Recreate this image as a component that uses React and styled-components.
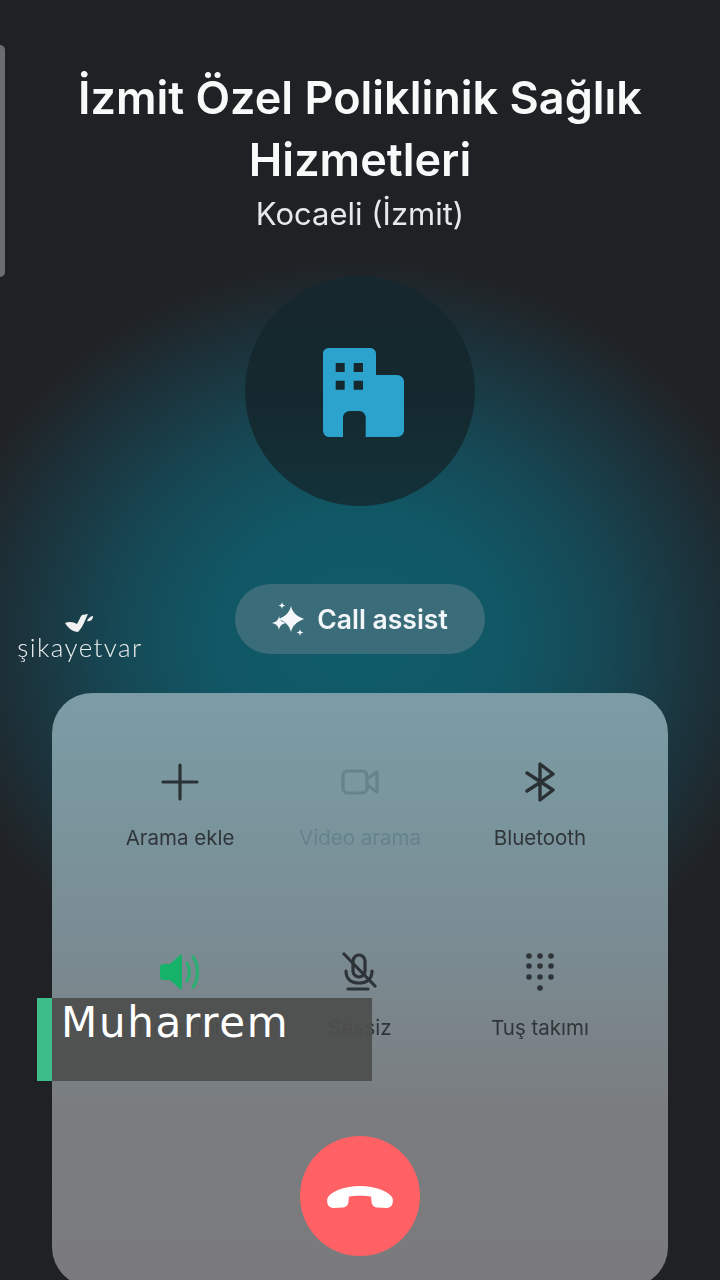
import React from "react";
import styled, { createGlobalStyle } from "styled-components";

const GlobalStyle = createGlobalStyle`
    html, body {
        margin: 0;
        padding: 0;
        background: #202124;
    }
`

const Page = styled.div`
    position: relative;
    width: 720px;
    height: 1280px;
    overflow: hidden;
    background: #202124;
    font-family: "Inter", "Liberation Sans", sans-serif;
`

const Screen = styled.div`
    position: relative;
    height: 1280px;
    display: flex;
    flex-direction: column;
    align-items: center;
    filter: blur(0.5px);
    background:
        radial-gradient(ellipse 430px 385px at 360px 640px,
            #0f5c6a 0%, #115664 35%, #164753 58%, #1b343d 78%, #1f272b 93%, #202124 100%);
`

const Title = styled.h1`
    margin: 67px 0 0;
    width: 640px;
    text-align: center;
    font-size: 45px;
    line-height: 62px;
    font-weight: 600;
    color: #f8f9f9;
`

const Subtitle = styled.div`
    font-size: 31px;
    line-height: 46px;
    color: #e6e8e9;
`

const Avatar = styled.div`
    margin-top: 39px;
    width: 230px;
    height: 230px;
    flex-shrink: 0;
    box-sizing: border-box;
    padding: 2px 0 0 6px;
    border-radius: 50%;
    background: linear-gradient(180deg, #16272d 0%, #14292f 55%, #133139 100%);
    display: flex;
    align-items: center;
    justify-content: center;
`

const Chip = styled.div`
    margin-top: 78px;
    width: 250px;
    height: 70px;
    flex-shrink: 0;
    border-radius: 35px;
    background: #3a6d79;
    display: flex;
    align-items: center;
    justify-content: center;
    gap: 13px;
    font-size: 26.5px;
    font-weight: 600;
    color: #f2f6f8;
`

const Panel = styled.div`
    margin-top: 39px;
    width: 616px;
    height: 594px;
    flex-shrink: 0;
    box-sizing: border-box;
    padding: 67px 38px 0;
    border-radius: 40px;
    background: linear-gradient(180deg, #7b9ca6 0%, #7a939b 25%, #7a8a91 45%, #7a7d80 70%, #7a7a7c 100%);
    display: flex;
    flex-direction: column;
    align-items: center;
`

const Grid = styled.div`
    width: 100%;
    display: grid;
    grid-template-columns: repeat(3, 180px);
    grid-auto-rows: 90px;
    row-gap: 100px;
`

const Item = styled.div`
    display: flex;
    flex-direction: column;
    align-items: center;
`

const IconBox = styled.div`
    height: 44px;
    display: flex;
    align-items: center;
    justify-content: center;
`

const Label = styled.div`
    margin-top: 22px;
    font-size: 20.5px;
    line-height: 24px;
    white-space: nowrap;
    color: ${props => props.$off ? "#64838c" : "#2f3539"};
`

const EndButton = styled.div`
    margin-top: 96px;
    width: 120px;
    height: 120px;
    flex-shrink: 0;
    box-sizing: border-box;
    padding-top: 2px;
    border-radius: 50%;
    background: #ff6165;
    display: flex;
    align-items: center;
    justify-content: center;
`

const Handle = styled.div`
    position: absolute;
    left: 0;
    top: 45px;
    width: 5px;
    height: 232px;
    border-radius: 0 5px 5px 0;
    background: #6c6d6f;
`

const Watermark = styled.div`
    position: absolute;
    left: 17px;
    top: 614px;
    width: 126px;
    display: flex;
    flex-direction: column;
    align-items: center;
    color: #eceef0;
`

const WatermarkText = styled.div`
    font-family: "Lato", sans-serif;
    font-weight: 300;
    font-size: 26px;
    line-height: 30px;
    letter-spacing: 1.4px;
    white-space: nowrap;
`

const NameTag = styled.div`
    position: absolute;
    left: 37px;
    top: 998px;
    width: 311px;
    height: 83px;
    border-left: 15px solid #3dbd8a;
    padding-left: 9px;
    background: rgba(78, 78, 78, 0.94);
    color: #ffffff;
    font-family: "DejaVu Sans", sans-serif;
    font-size: 42px;
    line-height: 50px;
    letter-spacing: 1.7px;
`

const BuildingIcon = () => (
    <svg width="81" height="89" viewBox="0 0 81 89">
        <path
            fillRule="evenodd"
            fill="#2ba3cd"
            d="M6 0H47C50.5 0 53 2.5 53 6V27H74C78 27 81 30 81 34V82C81 86 78 89 74 89H42.7V70C42.7 66 40 63 36 63H27C23 63 20 66 20 70V89H6C2.5 89 0 86 0 82V6C0 2.5 2.5 0 6 0ZM12.7 15V24H21.7V15ZM30.7 15V24H40V15ZM12.7 32.7V41.7H21.7V32.7ZM30.7 32.7V41.7H40V32.7Z"
        />
    </svg>
);

const SparkleIcon = () => (
    <svg width="32" height="34" viewBox="0 0 32 34" fill="#f5f8fb">
        <path d="M19 4C20.5 10 24 14 32 17C24 20 20.5 24 19 30C17.5 24 14 20 7 17C14 14 17.5 10 19 4Z"/>
        <path d="M7 14C7.8 18 9.5 20 14 21C9.5 22 7.8 24 7 28C6.2 24 4.5 22 0 21C4.5 20 6.2 18 7 14Z"/>
        <path d="M10 0C10.4 2.4 11 3 13.5 3.5C11 4 10.4 4.6 10 7C9.6 4.6 9 4 6.5 3.5C9 3 9.6 2.4 10 0Z"/>
        <path d="M28 27C28.4 29.4 29 30 31.5 30.5C29 31 28.4 31.6 28 34C27.6 31.6 27 31 24.5 30.5C27 30 27.6 29.4 28 27Z"/>
    </svg>
);

const LogoMark = () => (
    <svg width="30" height="18" viewBox="0 0 30 18" fill="#f1f1f4">
        <path d="M0 9C4 7 9 8 12 10C14 7 15 3 17 1L23 0C20 6 18 13 13 18C8 18 3 14 0 9Z"/>
        <path d="M22 7C23 4 26 2 28 2C28 5 26 8 22 7Z"/>
    </svg>
);

const PlusIcon = () => (
    <svg width="38" height="38" viewBox="0 0 38 38" stroke="#2a3135" strokeWidth="3.2" strokeLinecap="round">
        <path d="M19 2V36M2 19H36"/>
    </svg>
);

const VideoIcon = () => (
    <svg width="38" height="26" viewBox="0 0 38 26" fill="none" stroke="#64838c" strokeWidth="3.2" strokeLinejoin="round">
        <rect x="2" y="2" width="24" height="22" rx="5"/>
        <path d="M26 10L36 3V23L26 16"/>
    </svg>
);

const BluetoothIcon = () => (
    <svg width="32" height="40" viewBox="0 0 32 40" fill="none" stroke="#2a3135" strokeWidth="3.4" strokeLinecap="round" strokeLinejoin="round">
        <path d="M3 11L29 28L16 38V2L29 12L3 29"/>
    </svg>
);

const SpeakerIcon = () => (
    <svg width="41" height="36" viewBox="0 0 41 36" fill="none">
        <path d="M0 13C0 11 2 10 4 10H10L20 1C21 0 22 1 22 2V34C22 35 21 36 20 35L10 26H4C2 26 0 25 0 23Z" fill="#17b26a"/>
        <path d="M27 9C30 14 30 22 27 27" stroke="#2fae73" strokeWidth="3.4" strokeLinecap="round"/>
        <path d="M33 3C39 11 39 25 33 33" stroke="#2fae73" strokeWidth="3.4" strokeLinecap="round"/>
    </svg>
);

const MicOffIcon = () => (
    <svg width="36" height="40" viewBox="0 0 36 40" fill="none" stroke="#2d3337" strokeWidth="3.2" strokeLinecap="round">
        <rect x="11" y="3" width="12" height="22" rx="6"/>
        <path d="M4 19C4 27 9 31 17 31C25 31 30 27 30 19"/>
        <path d="M6 37H26"/>
        <path d="M2 2L33 34"/>
    </svg>
);

const DialpadIcon = () => (
    <svg width="28" height="38" viewBox="0 0 28 38" fill="#2d3337">
        {[3, 13, 24].map(y => [3, 14, 25].map(x => <circle key={x + "-" + y} cx={x} cy={y} r="2.8"/>))}
        <circle cx="14" cy="35" r="2.8"/>
    </svg>
);

const HangupIcon = () => (
    <svg width="66" height="22" viewBox="0 0 66 22" fill="#ffffff">
        <path d="M0.5 12C4 5 18 0 33 0C48 0 62 5 65.5 12C67 18 64 22 59 22L50 21.5C46 21 44.5 18 44.5 15L44 10.5C38 9.5 28 9.5 22 10.5L21.5 15C21.5 18 20 21 16 21.5L7 22C2 22 -1 18 0.5 12Z"/>
    </svg>
);

const actions = [
    {label: "Arama ekle", icon: <PlusIcon/>},
    {label: "Video arama", icon: <VideoIcon/>, off: true},
    {label: "Bluetooth", icon: <BluetoothIcon/>},
    {label: "Hoparlör", icon: <SpeakerIcon/>},
    {label: "Sessiz", icon: <MicOffIcon/>},
    {label: "Tuş takımı", icon: <DialpadIcon/>},
];

const App = () => {
    return (
        <Page>
            <GlobalStyle/>
            <Screen>
                <Handle/>
                <Title>İzmit Özel Poliklinik Sağlık Hizmetleri</Title>
                <Subtitle>Kocaeli (İzmit)</Subtitle>
                <Avatar><BuildingIcon/></Avatar>
                <Chip><SparkleIcon/>Call assist</Chip>
                <Watermark>
                    <LogoMark/>
                    <WatermarkText>şikayetvar</WatermarkText>
                </Watermark>
                <Panel>
                    <Grid>
                        {actions.map(action =>
                            <Item key={action.label}>
                                <IconBox>{action.icon}</IconBox>
                                <Label $off={action.off}>{action.label}</Label>
                            </Item>)}
                    </Grid>
                    <EndButton><HangupIcon/></EndButton>
                </Panel>
            </Screen>
            <NameTag>Muharrem</NameTag>
        </Page>
    );
}

export default App;
